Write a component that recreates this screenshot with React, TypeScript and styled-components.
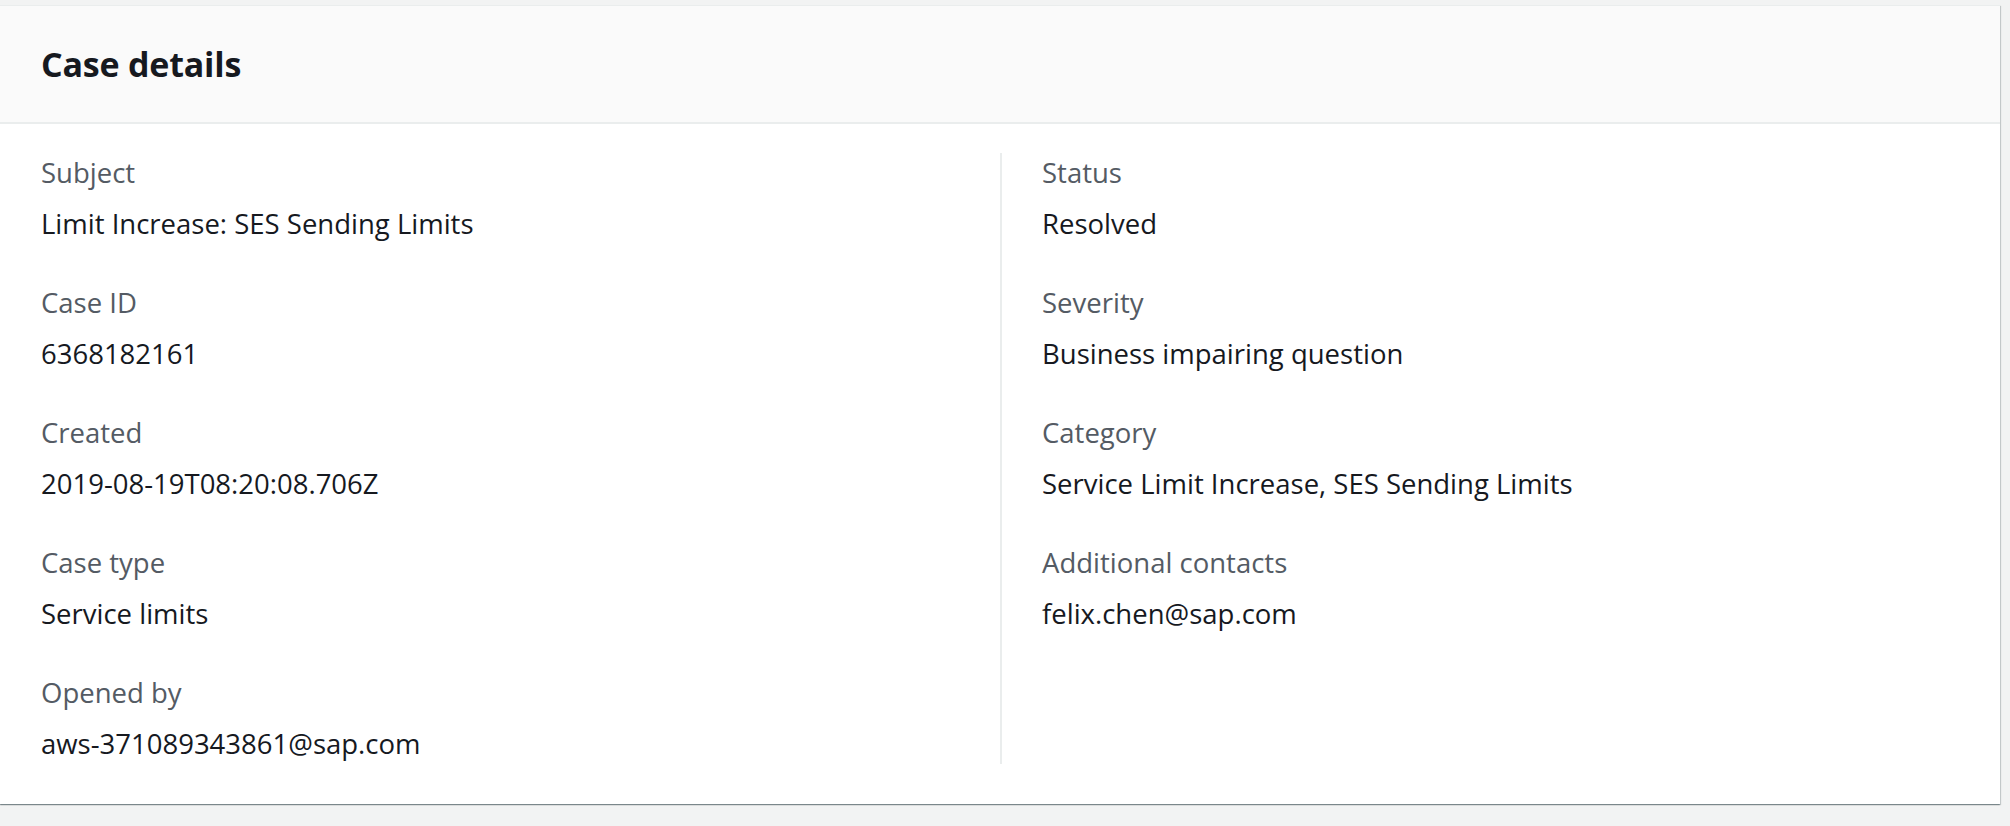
import React from 'react';
import styled, { createGlobalStyle } from 'styled-components';

interface FieldData {
    label: string;
    value: string;
}

const leftFields: FieldData[] = [
    { label: 'Subject', value: 'Limit Increase: SES Sending Limits' },
    { label: 'Case ID', value: '6368182161' },
    { label: 'Created', value: '2019-08-19T08:20:08.706Z' },
    { label: 'Case type', value: 'Service limits' },
    { label: 'Opened by', value: 'aws-371089343861@sap.com' },
];

const rightFields: FieldData[] = [
    { label: 'Status', value: 'Resolved' },
    { label: 'Severity', value: 'Business impairing question' },
    { label: 'Category', value: 'Service Limit Increase, SES Sending Limits' },
    { label: 'Additional contacts', value: 'felix.chen@sap.com' },
];

const FieldList: React.FC<{ fields: FieldData[] }> = ({ fields }) => (
    <Column>
        {fields.map((f) => (
            <Field key={f.label}>
                <Label>{f.label}</Label>
                <Value>{f.value}</Value>
            </Field>
        ))}
    </Column>
);

const App: React.FC = () => {
    return (
        <>
            <GlobalStyle />
            <Page>
                <Card>
                    <Header>
                        <Title>Case details</Title>
                    </Header>
                    <Body>
                        <FieldList fields={leftFields} />
                        <Divider />
                        <FieldList fields={rightFields} />
                    </Body>
                </Card>
            </Page>
        </>
    );
};

const GlobalStyle = createGlobalStyle`
  html, body {
    margin: 0;
    padding: 0;
    background: #f2f3f3;
  }

  body {
    font-family: "Open Sans", "Noto Sans", sans-serif;
    color: #16191f;
  }
`;

const Page = styled.div`
  min-height: 100vh;
  padding: 5px 10px 0 0;
  box-sizing: border-box;
`;

const Card = styled.section`
  background: #ffffff;
  border-top: 1px solid #eaeded;
  box-shadow: 0 1px 1px 0 rgba(0, 28, 36, 0.3),
    1px 1px 1px 0 rgba(0, 28, 36, 0.15),
    -1px 1px 1px 0 rgba(0, 28, 36, 0.15);
`;

const Header = styled.div`
  display: flex;
  align-items: center;
  height: 116px;
  padding: 0 41px;
  background: #fafafa;
  border-bottom: 2px solid #eaeded;
`;

const Title = styled.h2`
  margin: 0;
  font-size: 34px;
  font-weight: 700;
  line-height: 44px;
  letter-spacing: -0.2px;
  color: #16191f;
`;

const Body = styled.div`
  display: grid;
  grid-template-columns: 959px 2px 1fr;
  padding: 29px 0 40px 41px;
`;

const Divider = styled.div`
  background: #eaeded;
`;

const Column = styled.div`
  display: flex;
  flex-direction: column;
  gap: 39px;

  & + ${Divider} + & {
    padding-left: 40px;
  }
`;

const Field = styled.div`
  display: flex;
  flex-direction: column;
  gap: 11px;
`;

const Label = styled.div`
  font-size: 27.5px;
  line-height: 40px;
  color: #545b64;
`;

const Value = styled.div`
  font-size: 27.5px;
  line-height: 40px;
  color: #16191f;
`;

export default App;
